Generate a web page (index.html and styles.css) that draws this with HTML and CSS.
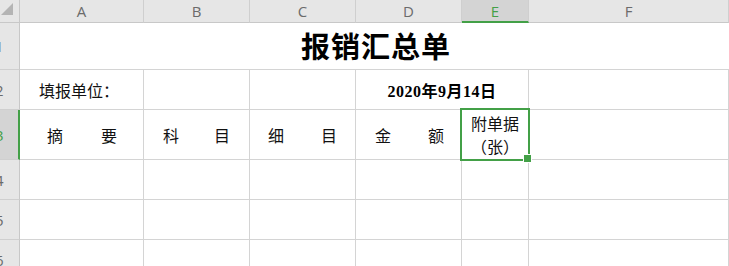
FILE: index.html
```html
<!DOCTYPE html>
<html lang="zh">
<head>
    <meta charset="UTF-8">
    <title>报销汇总单</title>
    <link rel="stylesheet" href="styles.css">
</head>
<body>
    <div class="sheet">
        <!-- 列标题 -->
        <div class="corner"><span class="tri"></span></div>
        <div class="colhead">A</div>
        <div class="colhead">B</div>
        <div class="colhead">C</div>
        <div class="colhead">D</div>
        <div class="colhead active">E</div>
        <div class="colhead">F</div>

        <!-- 第1行 标题 -->
        <div class="rowhead r1"><span>1</span></div>
        <div class="cell title">报销汇总单</div>

        <!-- 第2行 -->
        <div class="rowhead r2"><span>2</span></div>
        <div class="cell unit">填报单位：</div>
        <div class="cell"></div>
        <div class="cell"></div>
        <div class="cell date">2020年9月14日</div>
        <div class="cell"></div>

        <!-- 第3行 表头 -->
        <div class="rowhead r3 active"><span>3</span></div>
        <div class="cell dist da"><span>摘</span><span>要</span></div>
        <div class="cell dist db"><span>科</span><span>目</span></div>
        <div class="cell dist dc"><span>细</span><span>目</span></div>
        <div class="cell dist dd"><span>金</span><span>额</span></div>
        <div class="cell attach selected">附单据<br>（张）</div>
        <div class="cell"></div>

        <div class="rowhead r4"><span>4</span></div>
        <div class="cell"></div><div class="cell"></div><div class="cell"></div>
        <div class="cell"></div><div class="cell"></div><div class="cell"></div>

        <div class="rowhead r5"><span>5</span></div>
        <div class="cell"></div><div class="cell"></div><div class="cell"></div>
        <div class="cell"></div><div class="cell"></div><div class="cell"></div>

        <div class="rowhead r6"><span>6</span></div>
        <div class="cell"></div><div class="cell"></div><div class="cell"></div>
        <div class="cell"></div><div class="cell"></div><div class="cell"></div>
    </div>
</body>
</html>
```

FILE: styles.css
```css
*{
    margin: 0;
    padding: 0;
    box-sizing: border-box;
}
body{
    width: 729px;
    height: 266px;
    overflow: hidden;
    background: #fff;
    font-family: "Noto Sans CJK SC", sans-serif;
}
.sheet{
    display: grid;
    grid-template-columns: 20px 124px 106px 106px 106px 67px 1fr;
    grid-template-rows: 23px 47px 40px 50px 40px 40px 40px;
}
/* 左上角 */
.corner{
    background: #e6e6e6;
    border-right: 1px solid #c8c8c8;
    border-bottom: 1px solid #c8c8c8;
    padding: 3px 0 0 1px;
}
.corner .tri{
    display: block;
    width: 12px;
    height: 12px;
    background: #b4b4b4;
    clip-path: polygon(100% 0, 100% 100%, 0 100%);
}
.colhead{
    background: #e6e6e6;
    border-right: 1px solid #cfcfcf;
    border-bottom: 1px solid #c8c8c8;
    color: #6b6b6b;
    font-family: "Open Sans", "Liberation Sans", sans-serif;
    font-size: 15px;
    line-height: 22px;
    text-align: center;
}
.colhead.active{
    background: #d4d4d4;
    color: #43a047;
    border-bottom: 2px solid #43a047;
}
.rowhead{
    background: #e6e6e6;
    border-right: 1px solid #c8c8c8;
    border-bottom: 1px solid #cfcfcf;
    color: #6b6b6b;
    font-family: "Open Sans", "Liberation Sans", sans-serif;
    font-size: 15px;
    overflow: hidden;
    display: flex;
    align-items: center;
}
/* 行号被横向滚动遮住一半 */
.rowhead span{
    margin-left: -5px;
}
.rowhead.active{
    background: #d4d4d4;
    color: #43a047;
    border-right: 2px solid #43a047;
}
.cell{
    border-right: 1px solid #d4d4d4;
    border-bottom: 1px solid #d4d4d4;
    color: #111;
    font-size: 16px;
    display: flex;
    align-items: center;
}
.title{
    grid-column: 2 / 8;
    justify-content: center;
    padding: 0 0 2px 3px;
    font-size: 29px;
    letter-spacing: 1px;
    font-weight: bold;
    color: #000;
    border-right: none;
}
.unit{
    padding-left: 19px;
}
.date{
    grid-column: 5 / 7;
    justify-content: center;
    font-family: "Liberation Serif", "Noto Sans CJK SC", serif;
    font-size: 16px;
    letter-spacing: 0.5px;
    font-weight: bold;
    color: #000;
}
.dist{
    justify-content: space-between;
}
.da{ padding: 0 26px 0 27px; }
.db{ padding: 0 19px 0 19px; }
.dc{ padding: 0 18px 0 18px; }
.dd{ padding: 0 17px 0 19px; }
.attach{
    justify-content: center;
    text-align: center;
    line-height: 23px;
}
/* 选中框 */
.selected{
    position: relative;
}
.selected::before{
    content: "";
    position: absolute;
    left: -2px;
    right: -2px;
    top: -2px;
    bottom: -2px;
    border: 2px solid #43a047;
}
.selected::after{
    content: "";
    position: absolute;
    right: -4px;
    bottom: -4px;
    width: 7px;
    height: 7px;
    background: #43a047;
    border: 1px solid #fff;
}
```
